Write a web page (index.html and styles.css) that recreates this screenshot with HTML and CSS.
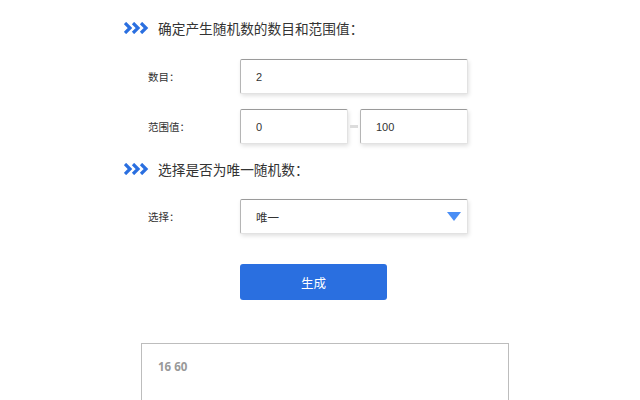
FILE: index.html
```html
<!DOCTYPE html>
<html lang="zh-CN">
<head>
    <meta charset="UTF-8">
    <meta name="viewport" content="width=device-width, initial-scale=1.0">
    <title>随机数生成器</title>
    <link rel="stylesheet" href="styles.css">
</head>
<body>
    <div class="page">
        <div class="section-title">
            <svg class="arrows" width="26" height="12" viewBox="0 0 26 12">
                <path d="M1 1 L6 6 L1 11 M9 1 L14 6 L9 11 M17 1 L22 6 L17 11" fill="none" stroke="#2a6fe0" stroke-width="3.2"/>
            </svg>
            <span>确定产生随机数的数目和范围值：</span>
        </div>

        <div class="row first">
            <label class="row-label" for="count">数目：</label>
            <input class="field wide" type="text" id="count" value="2">
        </div>

        <div class="row">
            <label class="row-label" for="min">范围值：</label>
            <input class="field half" type="text" id="min" value="0">
            <span class="dash"></span>
            <input class="field half" type="text" id="max" value="100">
        </div>

        <div class="section-title second">
            <svg class="arrows" width="26" height="12" viewBox="0 0 26 12">
                <path d="M1 1 L6 6 L1 11 M9 1 L14 6 L9 11 M17 1 L22 6 L17 11" fill="none" stroke="#2a6fe0" stroke-width="3.2"/>
            </svg>
            <span>选择是否为唯一随机数：</span>
        </div>

        <div class="row select-row">
            <label class="row-label">选择：</label>
            <div class="field wide select">
                <span>唯一</span>
                <span class="caret"></span>
            </div>
        </div>

        <button class="generate" onclick="generate()">生成</button>

        <div class="result" id="result">16 60</div>
    </div>

    <script>
        function generate() {
            const count = parseInt(document.getElementById('count').value, 10);
            const min = parseInt(document.getElementById('min').value, 10);
            const max = parseInt(document.getElementById('max').value, 10);
            const nums = [];
            while (nums.length < count && nums.length <= max - min) {
                const n = Math.floor(Math.random() * (max - min + 1)) + min;
                if (nums.indexOf(n) === -1) nums.push(n);
            }
            document.getElementById('result').textContent = nums.join(' ');
        }
    </script>
</body>
</html>
```

FILE: styles.css
```css
body {
    margin: 0;
    font-family: "Noto Sans CJK SC", "Noto Sans", sans-serif;
    background-color: #ffffff;
    color: #333;
}

.page {
    padding: 18px 0 0 124px;
}

.section-title {
    display: flex;
    align-items: center;
    height: 20px;
    font-size: 13.7px;
    color: #333;
}

.section-title.second {
    margin-top: 15px;
}

.arrows {
    margin-right: 8px;
}

.row {
    display: flex;
    align-items: center;
    margin-top: 15px;
    margin-left: 24px;
}

.row.first {
    margin-top: 21px;
}

.row.select-row {
    margin-top: 20px;
}

.row-label {
    width: 92px;
    font-size: 10.5px;
    color: #333;
}

.field {
    box-sizing: border-box;
    height: 35px;
    padding: 0 15px;
    border: 1px solid #e2e2e2;
    border-top-color: #9a9a9a;
    border-left-color: #b5b5b5;
    border-radius: 2px;
    box-shadow: 1px 2px 4px rgba(0, 0, 0, 0.12);
    font-family: "Liberation Sans", "Noto Sans CJK SC", sans-serif;
    font-size: 11px;
    color: #333;
    background: #fff;
    outline: none;
}

.wide {
    width: 228px;
}

.half {
    width: 108px;
}

.dash {
    width: 8px;
    height: 3px;
    margin: 0 2px;
    background-color: #dcdcdc;
}

.select {
    display: flex;
    align-items: center;
    justify-content: space-between;
    padding-right: 6px;
    font-family: "Noto Sans CJK SC", sans-serif;
    font-size: 11.5px;
}

.caret {
    width: 0;
    height: 0;
    border-left: 7px solid transparent;
    border-right: 7px solid transparent;
    border-top: 9px solid #4a8ef5;
}

.generate {
    display: block;
    margin: 30px 0 0 116px;
    width: 147px;
    height: 36px;
    border: none;
    border-radius: 3px;
    background-color: #2a6fe0;
    color: #fff;
    font-family: "Noto Sans CJK SC", sans-serif;
    font-size: 12.5px;
    cursor: pointer;
}

.result {
    box-sizing: border-box;
    margin: 43px 0 0 17px;
    width: 368px;
    height: 57px;
    padding: 15px 16px;
    border: 1px solid #bdbdbd;
    border-bottom: none;
    font-family: "Open Sans", sans-serif;
    font-size: 11.5px;
    font-weight: bold;
    color: #999;
}
```
